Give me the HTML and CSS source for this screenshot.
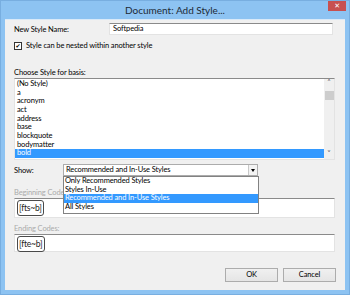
FILE: index.html
```html
<!DOCTYPE HTML>
<html>
<head>
<meta charset="utf-8">
<title>Document: Add Style...</title>
<link rel="stylesheet" href="styles.css">
</head>
<body>
	<div class="window">
		<div class="titlebar">
			<span></span>
			<span class="title">Document: Add Style...</span>
			<span class="close">&#x2715;</span>
		</div>
		<div class="client">
			<div class="name-row">
				<span class="name-label">New Style Name:</span>
				<div class="textbox name-box">Softpedia</div>
			</div>
			<div class="check-row">
				<span class="checkbox">&#x2714;</span>
				<span>Style can be nested within another style</span>
			</div>
			<div class="label basis-label">Choose Style for basis:</div>
			<div class="listbox">
				<div class="items">
					<div class="item">(No Style)</div>
					<div class="item">a</div>
					<div class="item">acronym</div>
					<div class="item">act</div>
					<div class="item">address</div>
					<div class="item">base</div>
					<div class="item">blockquote</div>
					<div class="item">bodymatter</div>
					<div class="item selected">bold</div>
				</div>
				<div class="scrollbar">
					<span class="arrow">&#x2c4;</span>
					<span class="thumb"></span>
					<span class="spacer"></span>
					<span class="arrow">&#x2c5;</span>
				</div>
			</div>
			<div class="show-row">
				<span class="show-label">Show:</span>
				<div class="combo">
					<span class="combo-text">Recommended and In-Use Styles</span>
					<span class="combo-btn"><i></i></span>
					<div class="dropdown">
						<div class="item">Only Recommended Styles</div>
						<div class="item">Styles In-Use</div>
						<div class="item selected">Recommended and In-Use Styles</div>
						<div class="item">All Styles</div>
					</div>
				</div>
			</div>
			<div class="label disabled begin-label">Beginning Codes:</div>
			<div class="textbox codes begin-box"><span class="code">[fts~b]</span></div>
			<div class="label disabled end-label">Ending Codes:</div>
			<div class="textbox codes end-box"><span class="code">[fte~b]</span></div>
			<div class="buttons">
				<span class="button">OK</span>
				<span class="button">Cancel</span>
			</div>
		</div>
	</div>
</body>
</html>
```

FILE: styles.css
```css
body {
 margin: 0;
 padding: 0;
 font: 7.5px Lato, "Open Sans", sans-serif;
 letter-spacing: -0.12px;
 color: #000;
}
.window {
 width: 350px;
 height: 295px;
 box-sizing: border-box;
 background: #8dc3f2;
 border: 1px solid #78aee0;
 padding: 0 4px 4px 4px;
 display: flex;
 flex-direction: column;
}
.titlebar {
 height: 18px;
 display: grid;
 grid-template-columns: 1fr auto 1fr;
 align-items: start;
}
.title {
 font-size: 10px;
 letter-spacing: 0;
 line-height: 19px;
 color: #1e2a36;
}
.close {
 justify-self: end;
 width: 18px;
 height: 10px;
 margin-right: -1px;
 background: #c75050;
 color: #fff;
 font: bold 7px "DejaVu Sans", sans-serif;
 line-height: 10px;
 text-align: center;
}
.client {
 flex: 1;
 background: #f0f0f0;
 border-top: 1px solid #d9e9f8;
 padding: 3px 10px 0 9px;
 display: flex;
 flex-direction: column;
}
.name-row {
 display: flex;
 align-items: center;
 height: 12px;
}
.name-label { width: 95px; }
.textbox {
 box-sizing: border-box;
 background: #fff;
 border: 1px solid #e3e3e3;
 border-top: 1px solid #8a8a8a;
}
.name-box {
 width: 224px;
 height: 12px;
 line-height: 10px;
 padding-left: 3px;
}
.check-row {
 display: flex;
 align-items: center;
 height: 9px;
 margin-top: 6px;
}
.checkbox {
 width: 6px;
 height: 6px;
 border: 1px solid #333;
 background: #fff;
 font: 6px "DejaVu Sans", sans-serif;
 line-height: 6px;
 text-align: center;
 margin-right: 4px;
}
.label {
 height: 9px;
 line-height: 9px;
}
.basis-label { margin-top: 18px; }
.disabled { color: #ababab; }
.listbox {
 margin-top: 1px;
 height: 82px;
 box-sizing: border-box;
 background: #fff;
 border: 1px solid #e3e3e3;
 border-top: 1px solid #8a8a8a;
 display: flex;
}
.items {
 flex: 1;
 padding-top: 1px;
}
.item {
 height: 8.67px;
 line-height: 8.67px;
 padding-left: 2px;
 white-space: nowrap;
}
.selected {
 background: #3399ff;
 color: #fff;
}
.scrollbar {
 width: 10px;
 background: #f0f0f0;
 display: flex;
 flex-direction: column;
 align-items: center;
}
.arrow {
 height: 9px;
 line-height: 9px;
 font: 8px "DejaVu Sans", sans-serif;
 color: #606060;
}
.thumb {
 width: 9px;
 height: 9px;
 margin-top: 3px;
 background: #cdcdcd;
}
.spacer { flex: 1; }
.show-row {
 display: flex;
 align-items: center;
 height: 12px;
 margin-top: 4px;
}
.show-label { width: 49px; }
.combo {
 position: relative;
 width: 195px;
 height: 12px;
 box-sizing: border-box;
 background: #fff;
 border: 1px solid #acacac;
 display: flex;
}
.combo-text {
 flex: 1;
 line-height: 10px;
 padding-left: 2px;
}
.combo-btn {
 width: 8px;
 border-left: 1px solid #c8c8c8;
 background: #f3f3f3;
 display: flex;
 align-items: center;
 justify-content: center;
}
.combo-btn i {
 border-left: 2px solid transparent;
 border-right: 2px solid transparent;
 border-top: 3px solid #000;
}
.dropdown {
 position: absolute;
 top: 11px;
 left: -1px;
 width: 196px;
 box-sizing: border-box;
 background: #fff;
 border: 1px solid #828282;
 padding-bottom: 1px;
 z-index: 2;
}
.dropdown .item { padding-left: 1px; }
.begin-label { margin-top: 12px; }
.codes {
 margin-top: 1px;
 padding: 1px 2px;
}
.begin-box { height: 20px; }
.end-box { height: 18px; }
.code {
 display: inline-block;
 height: 16px;
 box-sizing: border-box;
 border: 1px solid #4a4a4a;
 border-radius: 3px;
 padding: 0 1px;
 font-size: 8.5px;
 letter-spacing: -0.2px;
 line-height: 14px;
 color: #222;
}
.end-label { margin-top: 6px; }
.buttons {
 display: flex;
 justify-content: flex-end;
 gap: 5px;
 margin-top: 16px;
 margin-right: -1px;
}
.button {
 width: 53px;
 height: 14px;
 box-sizing: border-box;
 border: 1px solid #acacac;
 background: linear-gradient(#f0f0f0, #e5e5e5);
 text-align: center;
 line-height: 12px;
}
```
